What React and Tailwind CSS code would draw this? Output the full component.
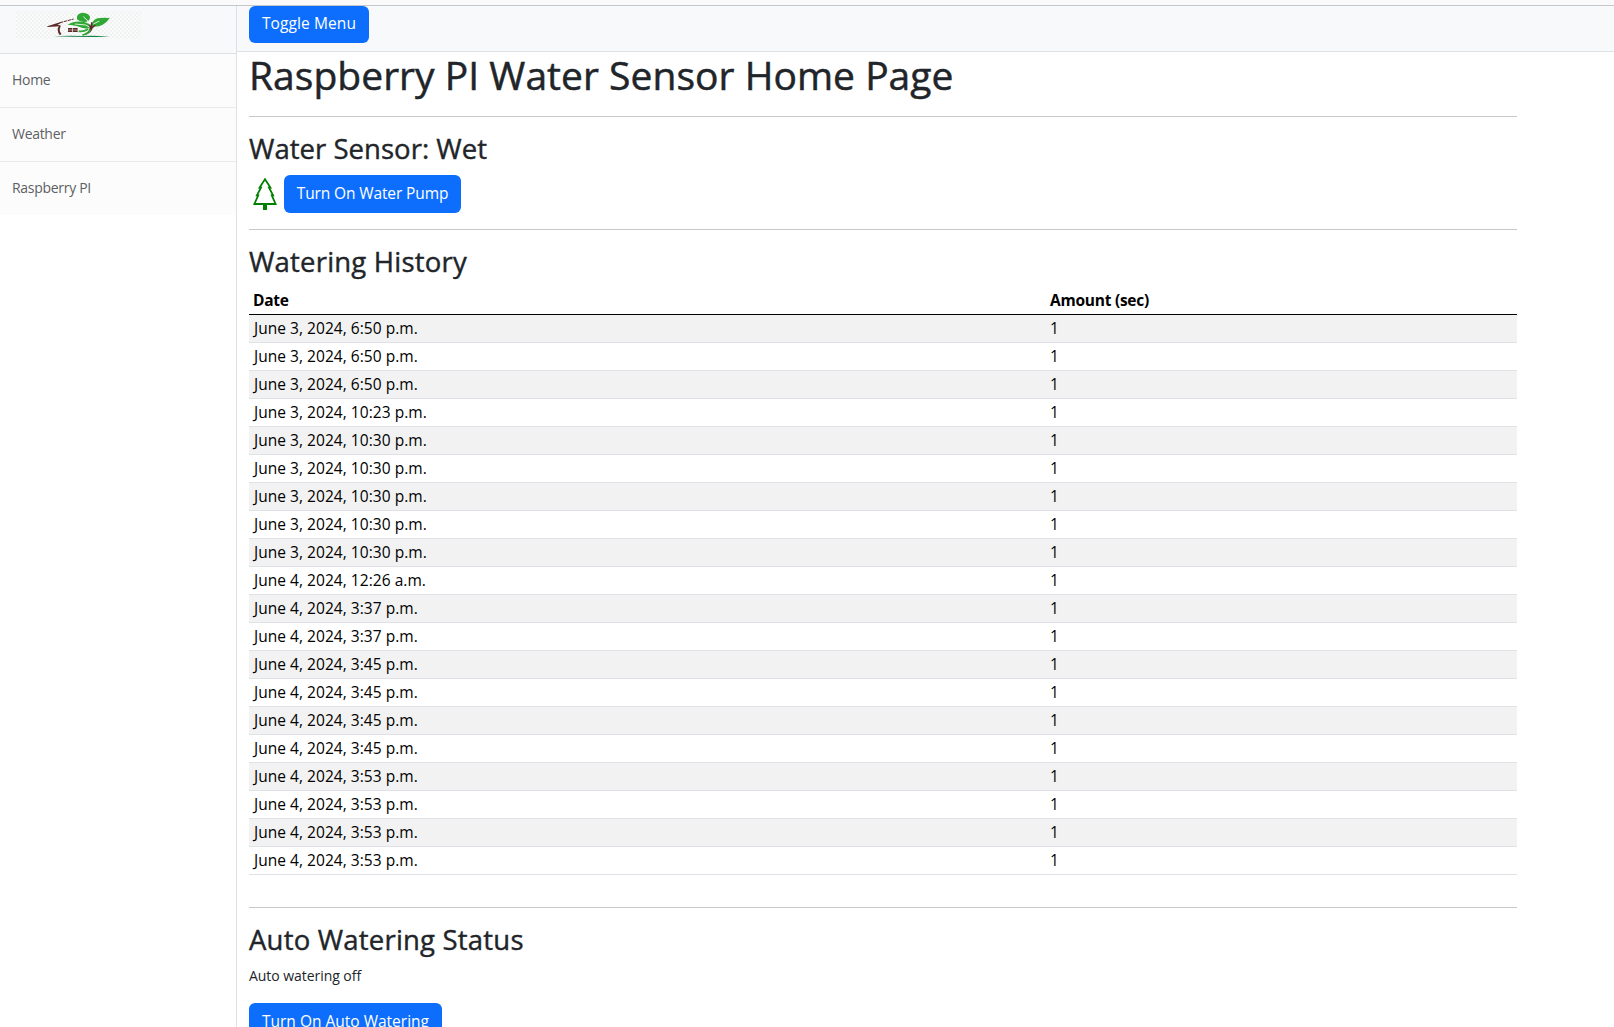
const history = [
  "June 3, 2024, 6:50 p.m.",
  "June 3, 2024, 6:50 p.m.",
  "June 3, 2024, 6:50 p.m.",
  "June 3, 2024, 10:23 p.m.",
  "June 3, 2024, 10:30 p.m.",
  "June 3, 2024, 10:30 p.m.",
  "June 3, 2024, 10:30 p.m.",
  "June 3, 2024, 10:30 p.m.",
  "June 3, 2024, 10:30 p.m.",
  "June 4, 2024, 12:26 a.m.",
  "June 4, 2024, 3:37 p.m.",
  "June 4, 2024, 3:37 p.m.",
  "June 4, 2024, 3:45 p.m.",
  "June 4, 2024, 3:45 p.m.",
  "June 4, 2024, 3:45 p.m.",
  "June 4, 2024, 3:45 p.m.",
  "June 4, 2024, 3:53 p.m.",
  "June 4, 2024, 3:53 p.m.",
  "June 4, 2024, 3:53 p.m.",
  "June 4, 2024, 3:53 p.m.",
];

function Logo() {
  return (
    <svg width="125" height="28" viewBox="48 33 375 84" aria-label="Green house logo">
      <defs>
        <pattern id="checker" width="12" height="12" patternUnits="userSpaceOnUse">
          <rect width="12" height="12" fill="#fbfbfb" />
          <path d="M0 0h6v6H0zM6 6h6v6H6z" fill="#f1f2f2" />
        </pattern>
      </defs>
      <rect x="48" y="33" width="375" height="84" fill="url(#checker)" />
      <path d="M159 109q40-3 88-1l26-1q30 1 56 2-28 3-56 2-60 0-114-2z" fill="#16824a" />
      <path d="M142 79l40-13 2 2-12 7 9 1v3l-39 2z" fill="#5c2b27" />
      <path d="M180 78q-9 12 2 26" stroke="#5c2b27" strokeWidth="6" fill="none" />
      <path d="M180 68l41-11" stroke="#5c2b27" strokeWidth="3" strokeDasharray="10 2" fill="none" />
      <path d="M204 84h13v5h-13zM219 84h14v5h-14zM204 91h13v5h-13zM219 91h14v5h-14z" fill="#5c2b27" />
      <path d="M231 50q2-11 17-12 19 1 22 13 1 10-10 14l-9 1q-14-2-20-8z" fill="#2fa836" />
      <path d="M203 74q22-14 50-8 18 5 20 17-10 4-26 1-13-7-44-10z" fill="#2fa836" />
      <path d="M276 79q0-19 16-24 15-3 37-1-11 17-28 23-12 4-25 2z" fill="#2fa836" />
      <path d="M250 50l17 16M225 72l32 3 16 9M280 72l18-9" stroke="#dff2dc" strokeWidth="3" fill="none" />
      <path d="M265 69l6 8 3-11 4 1-1 12 8-5 3 2-10 9q-3 14-23 20 14-12 14-24z" fill="#5c2b27" />
      <path d="M271 88q-3 11-24 18M236 94q16 2 28-7" stroke="#2fa836" strokeWidth="5" fill="none" />
    </svg>
  );
}

function TreeIcon() {
  return (
    <svg width="24" height="32" viewBox="0 0 24 32" className="ml-1 shrink-0" fill="none" stroke="#008000" strokeWidth="1.8">
      <path d="M12 1.2L6.6 9.6H8L3.9 17.4H5.2L1.4 26H22.6L18.8 17.4H20.1L16 9.6H17.4Z" />
      <path d="M12 26.5V32" strokeWidth="4" />
    </svg>
  );
}

function Button({ className, children }) {
  return (
    <button
      className={
        "flex shrink-0 items-center justify-center whitespace-nowrap rounded-md bg-[#0d6efd] text-[15.5px] leading-6 text-white " +
        className
      }
    >
      {children}
    </button>
  );
}

function Heading({ className = "tracking-[0.2px]", children }) {
  return (
    <h2 className={"mb-2 h-[34px] text-[27.5px] leading-[32px] [-webkit-text-stroke:0.4px_#212529] " + className}>
      {children}
    </h2>
  );
}

function SidebarLink({ children, last }) {
  return (
    <a
      className={
        "flex items-center bg-[#fcfcfc] px-3 pb-0.5 text-sm tracking-[-0.3px] text-[#5c5f63] " +
        (last ? "h-[53px]" : "h-[54px] border-b border-[#e9eaec]")
      }
    >
      {children}
    </a>
  );
}

export default function App() {
  return (
    <div className="flex h-[1027px] flex-col overflow-hidden bg-white font-['Open_Sans',sans-serif] text-[#212529]">
      <div className="h-1.5 shrink-0 border-b border-[#c6c7c9] bg-[#fafafa]" />
      <div className="flex min-h-0 flex-1">
        <aside className="w-[237px] shrink-0 border-r border-[#dee2e6]">
          <div className="h-12 border-b border-[#dee2e6] bg-[#f8f9fb] pl-4 pt-[5px]">
            <Logo />
          </div>
          <nav>
            <SidebarLink>Home</SidebarLink>
            <SidebarLink>Weather</SidebarLink>
            <SidebarLink last>Raspberry PI</SidebarLink>
          </nav>
        </aside>
        <div className="min-w-0 flex-1">
          <header className="h-[46px] border-b border-[#dee2e6] bg-[#f8f9fb] pl-3">
            <Button className="h-[37px] w-[120px] pb-[3px] tracking-[0.1px]">Toggle Menu</Button>
          </header>
          <main className="ml-3 w-[1268px]">
            <h1 className="h-16 text-[39px] leading-[45px] tracking-[0.03px] [-webkit-text-stroke:0.5px_#212529]">
              Raspberry PI Water Sensor Home Page
            </h1>
            <hr className="mb-4 border-[#c7c8c9]" />
            <Heading className="tracking-[0.03px]">Water Sensor: Wet</Heading>
            <div className="mb-4 flex h-[38px] items-center gap-[7px]">
              <TreeIcon />
              <Button className="h-[38px] w-[177px] pb-[2px] tracking-[-0.12px]">Turn On Water Pump</Button>
            </div>
            <hr className="mb-4 border-[#c7c8c9]" />
            <Heading>Watering History</Heading>
            <table className="w-full table-fixed border-collapse text-left text-[15.5px] leading-[19px] text-black">
              <colgroup>
                <col className="w-[797px]" />
                <col />
              </colgroup>
              <thead>
                <tr className="h-[26px] border-b border-black">
                  <th className="px-1 pb-1 pt-[3px] font-bold tracking-[-0.25px]">Date</th>
                  <th className="px-1 pb-1 pt-[3px] font-bold tracking-[-0.25px]">Amount (sec)</th>
                </tr>
              </thead>
              <tbody>
                {history.map((date, i) => (
                  <tr key={i} className="h-7 border-b border-[#dee2e6] odd:bg-[#f2f2f2]">
                    <td className="py-1 pl-[5px] pr-1 tracking-[0.04px]">{date}</td>
                    <td className="px-1 py-1">1</td>
                  </tr>
                ))}
              </tbody>
            </table>
            <hr className="mb-4 mt-8 border-[#c7c8c9]" />
            <Heading>Auto Watering Status</Heading>
            <p className="mb-4 h-[21px] text-sm leading-5 tracking-[-0.05px]">Auto watering off</p>
            <Button className="h-[38px] w-[193px] pb-[2px]">Turn On Auto Watering</Button>
          </main>
        </div>
      </div>
    </div>
  );
}
